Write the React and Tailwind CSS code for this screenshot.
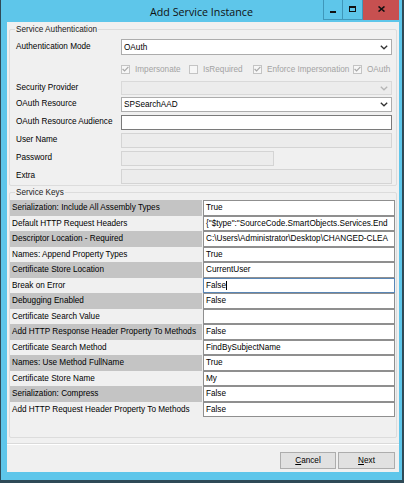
import React from 'react';

const ROWS = [
  ['Serialization: Include All Assembly Types', 'True'],
  ['Default HTTP Request Headers', '{"$type":"SourceCode.SmartObjects.Services.End'],
  ['Descriptor Location - Required', 'C:\\Users\\Administrator\\Desktop\\CHANGED-CLEA'],
  ['Names: Append Property Types', 'True'],
  ['Certificate Store Location', 'CurrentUser'],
  ['Break on Error', 'False', true],
  ['Debugging Enabled', 'False'],
  ['Certificate Search Value', ''],
  ['Add HTTP Response Header Property To Methods', 'False'],
  ['Certificate Search Method', 'FindBySubjectName'],
  ['Names: Use Method FullName', 'True'],
  ['Certificate Store Name', 'My'],
  ['Serialization: Compress', 'False'],
  ['Add HTTP Request Header Property To Methods', 'False'],
];

function Chevron({ muted }) {
  return (
    <svg width="8" height="5" viewBox="0 0 8 5" className="mr-[3px] shrink-0">
      <path d="M0.8 0.8 L4 3.8 L7.2 0.8" fill="none" stroke={muted ? '#b5b5b5' : '#333'} strokeWidth="1.3" />
    </svg>
  );
}

function Combo({ value, disabled, h = 'h-[16px]' }) {
  return (
    <div className={`${h} flex-1 flex items-center justify-between border ${disabled ? 'border-[#d9d9d9] bg-[#ececec]' : 'border-[#acacac] bg-white'}`}>
      <span className="pl-[2px]">{value}</span>
      <Chevron muted={disabled} />
    </div>
  );
}

function TextBox({ disabled, w = 'flex-1' }) {
  return <div className={`h-[15px] ${w} border ${disabled ? 'border-[#d4d4d4] bg-[#ececec]' : 'border-[#7a7a7a] bg-white'}`} />;
}

function Check({ checked, label, w }) {
  return (
    <div className={`${w} flex items-center gap-[5px] text-[#a3a3a3]`}>
      <div className="w-[9px] h-[9px] border border-[#c4c4c4] bg-[#f6f6f6] flex items-center justify-center">
        {checked && (
          <svg width="7" height="6" viewBox="0 0 7 6">
            <path d="M0.6 3 L2.6 5 L6.4 0.8" fill="none" stroke="#a8a8a8" strokeWidth="1.2" />
          </svg>
        )}
      </div>
      <span>{label}</span>
    </div>
  );
}

function Field({ label, children, mt, h = 'h-[15px]' }) {
  return (
    <div className={`flex items-center ${mt} ${h}`}>
      <div className="w-[111px] pl-[6px] -mt-[2px] shrink-0">{label}</div>
      {children}
    </div>
  );
}

export default function App() {
  return (
    <div className="w-[407px] h-[484px] bg-white font-['Liberation_Sans',Arial,sans-serif] text-[8.2px] leading-[11px] text-black">
      <div className="w-[404px] h-[483px] bg-[#5ec6ea] border-l border-r-2 border-b-[3px] border-[#2f4a57] flex flex-col">
        {/* title bar */}
        <div className="h-[22px] grid grid-cols-[1fr_auto_1fr] items-start">
          <div />
          <div className="pt-[5px] font-['Open_Sans',sans-serif] text-[10.7px] leading-[14px] text-[#111]">Add Service Instance</div>
          <div className="flex justify-end pr-[3px]">
            <div className="w-[20px] h-[20px] border border-t-0 border-[#3f97ba] flex items-center justify-center">
              <div className="w-[6px] h-[2px] bg-[#111] mt-[4px]" />
            </div>
            <div className="w-[20px] h-[20px] border border-t-0 border-l-0 border-[#3f97ba] flex items-center justify-center">
              <div className="w-[7px] h-[6px] border border-t-2 border-[#111] -mt-[2px]" />
            </div>
            <div className="w-[36px] h-[20px] bg-[#c75050] flex items-center justify-center">
              <svg width="7" height="6" viewBox="0 0 7 6" className="-mt-[3px]">
                <path d="M0.5 0.5 L6.5 5.5 M6.5 0.5 L0.5 5.5" stroke="#111" strokeWidth="1.6" />
              </svg>
            </div>
          </div>
        </div>

        {/* client area */}
        <div className="ml-[6px] mr-[3px] h-[450px] bg-[#f0f0f0] flex flex-col">
          {/* Service Authentication */}
          <div className="mt-[7px] mx-[2px] h-[157px] border border-[#dcdcdc] rounded-[2px] flex flex-col">
            <div className="-mt-[6px] ml-[5px] w-fit px-[1px] bg-[#f0f0f0] text-[#222]">Service Authentication</div>
            <div className="pr-[4px] flex flex-col">
              <Field label="Authentication Mode" mt="mt-[4px]" h="h-[16px]">
                <Combo value="OAuth" />
              </Field>
              <div className="mt-[7px] h-[14px] flex items-center pl-[111px]">
                <Check checked label="Impersonate" w="w-[68px]" />
                <Check label="IsRequired" w="w-[64px]" />
                <Check checked label="Enforce Impersonation" w="w-[100px]" />
                <Check checked label="OAuth" w="" />
              </div>
              <Field label="Security Provider" mt="mt-[5px]" h="h-[14px]">
                <Combo disabled h="h-[14px]" />
              </Field>
              <Field label="OAuth Resource" mt="mt-[2px]">
                <Combo value="SPSearchAAD" h="h-[15px]" />
              </Field>
              <Field label="OAuth Resource Audience" mt="mt-[3px]">
                <TextBox />
              </Field>
              <Field label="User Name" mt="mt-[3px]">
                <TextBox disabled />
              </Field>
              <Field label="Password" mt="mt-[3px]">
                <TextBox disabled w="w-[153px]" />
              </Field>
              <Field label="Extra" mt="mt-[3px]">
                <TextBox disabled />
              </Field>
            </div>
          </div>

          {/* Service Keys */}
          <div className="mt-[6px] mx-[2px] h-[246px] border border-[#dcdcdc] rounded-[2px] flex flex-col">
            <div className="-mt-[6px] ml-[5px] w-fit px-[1px] bg-[#f0f0f0] text-[#222]">Service Keys</div>
            <div className="mt-[2px] flex flex-col">
              {ROWS.map(([label, value, focused], i) => (
                <div key={label} className="h-[15.5px] flex">
                  <div className={`w-[192px] shrink-0 pl-[2px] flex items-center whitespace-nowrap overflow-hidden ${i % 2 === 0 ? 'bg-[#c4c4c4]' : ''}`}>
                    {label}
                  </div>
                  <div className={`ml-[1px] w-[192px] border ${focused ? 'border-[#5a86b5]' : 'border-[#8f8f8f]'} bg-white flex items-center pl-[2px] whitespace-nowrap overflow-hidden`}>
                    {value}
                    {focused && <span className="w-px h-[9px] bg-black" />}
                  </div>
                </div>
              ))}
            </div>
          </div>

          {/* separator */}
          <div className="mt-[5px] h-[2px] border-t border-[#dadada] border-b border-b-white" />

          {/* buttons */}
          <div className="mt-[7px] flex justify-end gap-[2px] pr-[4px]">
            <button className="w-[56px] h-[17px] bg-[#e1e1e1] border border-[#adadad] text-[8.2px] leading-[11px]">
              <span className="underline">C</span>ancel
            </button>
            <button className="w-[57px] h-[17px] bg-[#e1e1e1] border border-[#adadad] text-[8.2px] leading-[11px]">
              <span className="underline">N</span>ext
            </button>
          </div>
        </div>
      </div>
    </div>
  );
}
